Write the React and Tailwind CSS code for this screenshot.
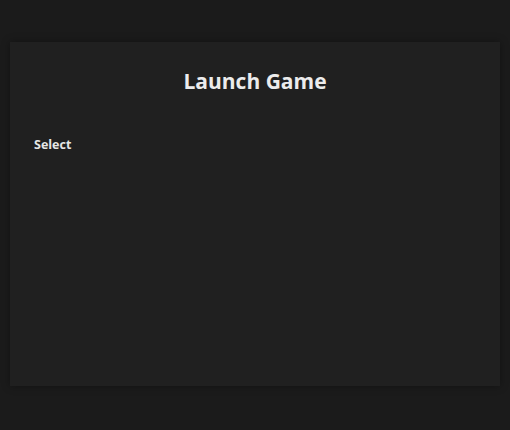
import React from 'react';

const App = () => {
  return (
    <div
      className="min-h-[430px] w-full bg-[#1b1b1b] px-[10px] pt-[42px] pb-[44px]"
      style={{ fontFamily: '"Open Sans", "Noto Sans", sans-serif' }}
    >
      {/* Launch card */}
      <div className="h-[344px] bg-[#202020] shadow-[0_0_8px_rgba(0,0,0,0.35)] px-6 pt-[24px]">
        <h1 className="text-center text-[21px] font-bold text-[#ececec] leading-[30px]">
          Launch Game
        </h1>
        <div className="mt-[35px]">
          <label className="text-[12.5px] font-bold text-[#e6e6e6] leading-[18px]">Select</label>
        </div>
      </div>
    </div>
  );
};

export default App;
